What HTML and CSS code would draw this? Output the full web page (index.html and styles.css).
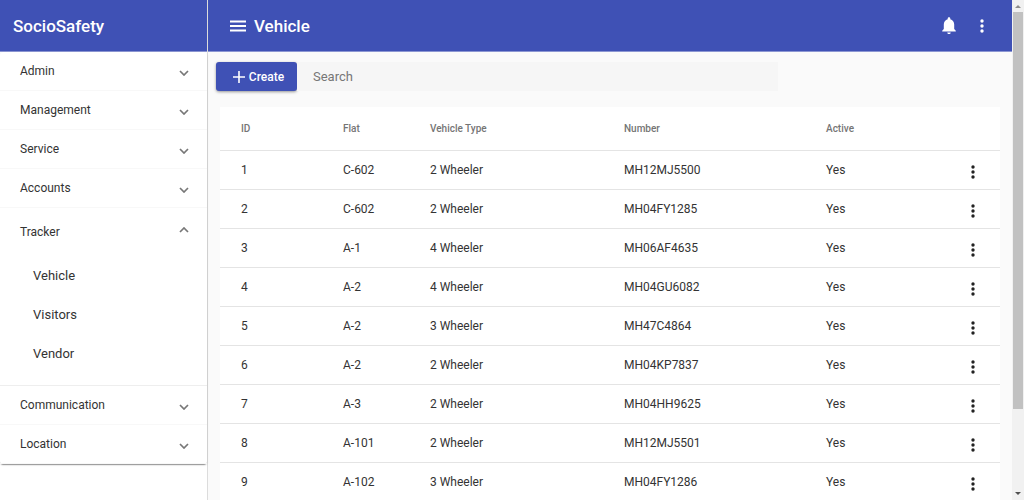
FILE: index.html
```html
<!DOCTYPE html>
<html lang="en">
<head>
  <meta charset="UTF-8" />
  <meta name="viewport" content="width=device-width, initial-scale=1.0"/>
  <title>SocioSafety - Vehicle</title>
  <link rel="stylesheet" href="styles.css">
</head>
<body>
  <!-- Shared icons -->
  <svg class="sprite" aria-hidden="true">
    <symbol id="chevron" viewBox="0 0 10 6"><path d="M1 1l4 4 4-4" fill="none" stroke="currentColor" stroke-width="1.7"/></symbol>
    <symbol id="dots" viewBox="0 0 4 14"><circle cx="2" cy="2" r="1.7"/><circle cx="2" cy="7" r="1.7"/><circle cx="2" cy="12" r="1.7"/></symbol>
  </svg>

  <!-- Sidebar -->
  <aside class="sidebar">
    <div class="toolbar brand">SocioSafety</div>
    <nav class="menu">
      <button class="menu-item">Admin <svg class="chevron"><use href="#chevron"/></svg></button>
      <button class="menu-item">Management <svg class="chevron"><use href="#chevron"/></svg></button>
      <button class="menu-item">Service <svg class="chevron"><use href="#chevron"/></svg></button>
      <button class="menu-item">Accounts <svg class="chevron"><use href="#chevron"/></svg></button>
      <div class="menu-group">
        <button class="menu-item open" aria-expanded="true">Tracker <svg class="chevron"><use href="#chevron"/></svg></button>
        <div class="submenu">
          <a href="#">Vehicle</a>
          <a href="#">Visitors</a>
          <a href="#">Vendor</a>
        </div>
      </div>
      <button class="menu-item">Communication <svg class="chevron"><use href="#chevron"/></svg></button>
      <button class="menu-item">Location <svg class="chevron"><use href="#chevron"/></svg></button>
    </nav>
  </aside>

  <!-- Content -->
  <main class="content">
    <header class="toolbar">
      <button class="icon-btn" aria-label="Menu">
        <svg width="16" height="12" viewBox="0 0 16 12"><path d="M0 1.500h16M0 6h16M0 10.500h16" stroke="currentColor" stroke-width="1.8"/></svg>
      </button>
      <h1>Vehicle</h1>
      <button class="icon-btn bell" aria-label="Notifications">
        <svg width="14" height="17" viewBox="0 0 14 17"><path fill="currentColor" d="M7 17c.9 0 1.700-.7 1.700-1.600H5.300c0 .9.8 1.600 1.700 1.600zM12.200 12V7.500c0-2.600-1.400-4.700-3.900-5.300v-.6C8.300.8 7.700.3 7 .3S5.700.8 5.700 1.600v.6C3.200 2.800 1.800 4.900 1.800 7.500V12L.2 13.700v.8h13.600v-.8z"/></svg>
      </button>
      <button class="icon-btn" aria-label="More"><svg class="dots"><use href="#dots"/></svg></button>
    </header>

    <div class="actions">
      <button class="create">
        <svg width="12" height="12" viewBox="0 0 12 12"><path d="M6 0v12M0 6h12" stroke="currentColor" stroke-width="1.6"/></svg>
        Create
      </button>
      <input class="search" type="text" placeholder="Search" aria-label="Search">
    </div>

    <table class="list">
      <thead>
        <tr>
          <th class="col-id">ID</th>
          <th class="col-flat">Flat</th>
          <th class="col-type">Vehicle Type</th>
          <th class="col-number">Number</th>
          <th class="col-active">Active</th>
          <th></th>
        </tr>
      </thead>
      <tbody id="rows"></tbody>
    </table>
  </main>

  <!-- Scroll track -->
  <div class="scroll">
    <svg width="6" height="3" viewBox="0 0 6 3"><path d="M0 3l3-3 3 3z" fill="#8c8c8c"/></svg>
    <div class="thumb"></div>
    <svg width="6" height="3" viewBox="0 0 6 3"><path d="M0 0l3 3 3-3z" fill="#505050"/></svg>
  </div>

  <script src="script.js"></script>
</body>
</html>
```
FILE: styles.css
```css
/* Global Reset */
* {
  margin: 0;
  padding: 0;
  box-sizing: border-box;
}
body {
  font-family: Roboto, sans-serif;
  font-size: 12px;
  color: #333;
  background: #fafafa;
  height: 100vh;
  display: flex;
  overflow: hidden;
}
button,
input {
  font: inherit;
  color: inherit;
  border: none;
  background: none;
}
button {
  cursor: pointer;
}
a {
  color: inherit;
  text-decoration: none;
}
.sprite {
  position: absolute;
  width: 0;
  height: 0;
}
/* Toolbar */
.toolbar {
  height: 52px;
  background: #3f51b5;
  border-bottom: 1px solid #8c96d2;
  color: #fff;
  display: flex;
  align-items: center;
  padding: 0 28px 0 22px;
}
.brand {
  font-size: 17px;
  font-weight: 500;
  padding: 0 13px;
}
.toolbar h1 {
  font-size: 17px;
  font-weight: 500;
  margin-left: 8px;
}
.icon-btn {
  display: flex;
}
.bell {
  margin-left: auto;
  margin-right: 24px;
}
.dots {
  width: 4px;
  height: 14px;
  fill: currentColor;
}
/* Sidebar */
.sidebar {
  width: 208px;
  flex-shrink: 0;
  background: #fff;
  border-right: 1px solid #dcdcdc;
}
.menu {
  border-radius: 3px;
  box-shadow: 0 2px 1px -1px rgba(0,0,0,0.3), 0 1px 2px rgba(0,0,0,0.2);
}
.menu-item {
  width: 100%;
  height: 39px;
  padding: 0 18px 0 20px;
  display: flex;
  align-items: center;
  justify-content: space-between;
  border-bottom: 1px solid #f8f8f8;
}
.chevron {
  width: 10px;
  height: 6px;
  margin-top: 4px;
  color: #777;
}
.menu-group {
  border-bottom: 1px solid #eee;
  padding-bottom: 12px;
}
.menu-item.open {
  height: 48px;
  border-bottom: none;
}
.open .chevron {
  margin-top: 0;
  margin-bottom: 4px;
  transform: rotate(180deg);
}
.submenu a {
  display: block;
  padding-left: 33px;
  font-size: 13px;
  line-height: 39px;
}
/* Content */
.content {
  flex: 1;
  min-width: 0;
}
.actions {
  display: flex;
  align-items: center;
  padding: 10px 8px 16px;
}
.create {
  width: 81px;
  height: 29px;
  background: #3f51b5;
  color: #fff;
  font-weight: 500;
  border-radius: 3px;
  box-shadow: 0 1px 3px rgba(0,0,0,0.4);
  display: flex;
  align-items: center;
  justify-content: center;
  gap: 4px;
  padding-left: 4px;
}
.search {
  flex: 0 1 61%;
  height: 29px;
  padding: 0 16px;
  font-size: 13px;
  background: #f6f6f6;
}
.search::placeholder {
  color: #777;
}
/* Vehicle table */
.list {
  width: calc(100% - 24px);
  margin: 0 12px;
  table-layout: fixed;
  border-collapse: separate;
  border-spacing: 0;
  background: #fff;
}
.list th,
.list td {
  text-align: left;
  height: 39px;
  border-bottom: 1px solid #e4e4e4;
}
.list th {
  height: 44px;
  font-size: 10px;
  font-weight: 500;
  color: #757575;
}
.list th:first-child,
.list td:first-child {
  padding-left: 21px;
}
.list td:last-child {
  padding: 4px 25px 0 0;
}
.list .icon-btn {
  margin-left: auto;
  color: #222;
}
.col-id {
  width: 123px;
}
.col-flat {
  width: 87px;
}
.col-type {
  width: 194px;
}
.col-number {
  width: 202px;
}
.col-active {
  width: 90px;
}
/* Scroll track */
.scroll {
  width: 12px;
  padding: 5px 1px;
  background: #f1f1f1;
  display: flex;
  flex-direction: column;
  align-items: center;
  gap: 4px;
}
.scroll svg:last-child {
  margin-top: auto;
}
.thumb {
  width: 100%;
  height: 81%;
  background: #c1c1c1;
}
```
FILE: script.js
```js
const vehicles = [
  [1, 'C-602', '2 Wheeler', 'MH12MJ5500'],
  [2, 'C-602', '2 Wheeler', 'MH04FY1285'],
  [3, 'A-1', '4 Wheeler', 'MH06AF4635'],
  [4, 'A-2', '4 Wheeler', 'MH04GU6082'],
  [5, 'A-2', '3 Wheeler', 'MH47C4864'],
  [6, 'A-2', '2 Wheeler', 'MH04KP7837'],
  [7, 'A-3', '2 Wheeler', 'MH04HH9625'],
  [8, 'A-101', '2 Wheeler', 'MH12MJ5501'],
  [9, 'A-102', '3 Wheeler', 'MH04FY1286']
];

// Fill the vehicle table
document.getElementById('rows').innerHTML = vehicles.map(v => `
  <tr>
    <td>${v[0]}</td>
    <td>${v[1]}</td>
    <td>${v[2]}</td>
    <td>${v[3]}</td>
    <td>Yes</td>
    <td><button class="icon-btn" aria-label="Options"><svg class="dots"><use href="#dots"/></svg></button></td>
  </tr>`).join('');
```
